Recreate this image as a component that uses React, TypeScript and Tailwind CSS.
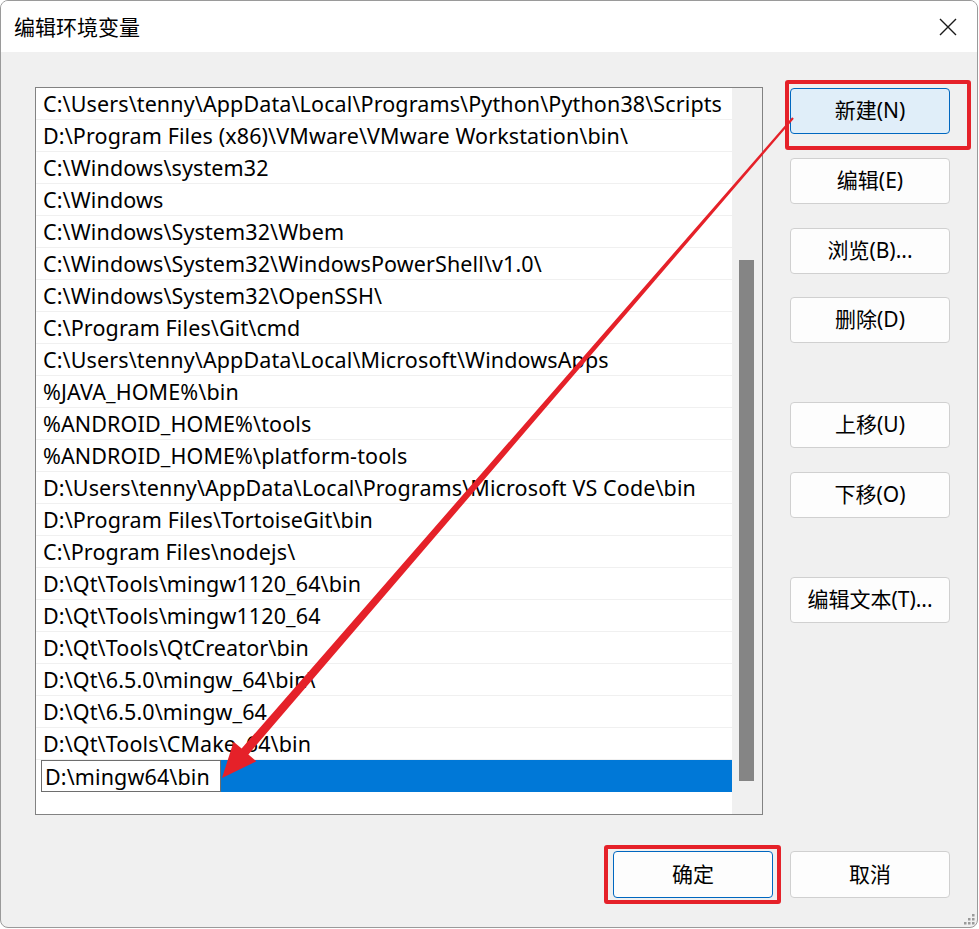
import React from "react";

const rows: string[] = [
  String.raw`C:\Users\tenny\AppData\Local\Programs\Python\Python38\Scripts`,
  String.raw`D:\Program Files (x86)\VMware\VMware Workstation\bin\ `.trim(),
  String.raw`C:\Windows\system32`,
  String.raw`C:\Windows`,
  String.raw`C:\Windows\System32\Wbem`,
  String.raw`C:\Windows\System32\WindowsPowerShell\v1.0\ `.trim(),
  String.raw`C:\Windows\System32\OpenSSH\ `.trim(),
  String.raw`C:\Program Files\Git\cmd`,
  String.raw`C:\Users\tenny\AppData\Local\Microsoft\WindowsApps`,
  String.raw`%JAVA_HOME%\bin`,
  String.raw`%ANDROID_HOME%\tools`,
  String.raw`%ANDROID_HOME%\platform-tools`,
  String.raw`D:\Users\tenny\AppData\Local\Programs\Microsoft VS Code\bin`,
  String.raw`D:\Program Files\TortoiseGit\bin`,
  String.raw`C:\Program Files\nodejs\ `.trim(),
  String.raw`D:\Qt\Tools\mingw1120_64\bin`,
  String.raw`D:\Qt\Tools\mingw1120_64`,
  String.raw`D:\Qt\Tools\QtCreator\bin`,
  String.raw`D:\Qt\6.5.0\mingw_64\bin\ `.trim(),
  String.raw`D:\Qt\6.5.0\mingw_64`,
  String.raw`D:\Qt\Tools\CMake_64\bin`,
];

function Btn({ label, primary, className = "" }: { label: string; primary?: "blue" | "white"; className?: string }) {
  const base =
    primary === "blue"
      ? "bg-[#e0eef9] border-[#0067c0]"
      : primary === "white"
      ? "bg-[#fdfdfd] border-[#0067c0]"
      : "bg-[#fdfdfd] border-[#d0d0d0]";
  return (
    <div
      className={`w-[160px] h-[46px] flex items-center justify-center rounded-[4px] border text-[21px] text-black ${base} ${className}`}
    >
      {label}
    </div>
  );
}

export default function App() {
  return (
    <div
      className="w-[979px] h-[929px] bg-white relative overflow-hidden"
      style={{ fontFamily: "'Segoe UI', 'Noto Sans', 'Noto Sans CJK SC', sans-serif" }}
    >
      <div className="w-[978px] h-[928px] rounded-[8px] border border-[#9a9a9a] bg-[#f0f0f0] flex flex-col overflow-hidden">
        {/* title bar */}
        <div className="h-[51px] bg-white flex items-center justify-between pl-[13px] pr-[20px] shrink-0">
          <span className="text-[21px] text-black leading-none" style={{ fontFamily: "'Noto Sans CJK SC', sans-serif" }}>
            编辑环境变量
          </span>
          <svg width="18" height="18" viewBox="0 0 18 18">
            <path d="M1 1 L17 17 M17 1 L1 17" stroke="#1a1a1a" strokeWidth="1.4" fill="none" />
          </svg>
        </div>

        {/* body */}
        <div className="flex pl-[34px] pt-[35px]">
          {/* list box */}
          <div className="w-[728px] h-[728px] border border-[#828282] bg-white flex">
            <div className="w-[696px] flex flex-col">
              {rows.map((r) => (
                <div
                  key={r}
                  className="h-[32px] shrink-0 border-b border-[#f0f0f0] pl-[7px] pt-[1px] flex items-center text-[21.5px] tracking-[0.12px] text-black whitespace-nowrap leading-none"
                >
                  {r}
                </div>
              ))}
              <div className="h-[32px] shrink-0 flex items-stretch pl-[5px]">
                <div className="w-[180px] border border-[#6e6e6e] bg-white flex items-center pl-[3px] pt-[1px] text-[21.5px] tracking-[0.12px] text-black leading-none">
                  {String.raw`D:\mingw64\bin`}
                </div>
                <div className="flex-1 bg-[#0078d7]" />
              </div>
            </div>
            <div className="flex-1 bg-[#f0f0f0] pl-[7px] pt-[172px]">
              <div className="w-[15px] h-[521px] bg-[#858585]" />
            </div>
          </div>

          {/* right buttons */}
          <div className="ml-[27px] flex flex-col">
            <Btn label="新建(N)" primary="blue" className="mt-[1px]" />
            <Btn label="编辑(E)" className="mt-[24px]" />
            <Btn label="浏览(B)..." className="mt-[24px]" />
            <Btn label="删除(D)" className="mt-[23px]" />
            <Btn label="上移(U)" className="mt-[59px]" />
            <Btn label="下移(O)" className="mt-[24px]" />
            <Btn label="编辑文本(T)..." className="mt-[59px]" />
          </div>
        </div>

        {/* bottom buttons */}
        <div className="flex justify-end gap-[17px] pr-[27px] mt-[36px]">
          <Btn label="确定" primary="white" className="h-[47px]" />
          <Btn label="取消" className="h-[47px]" />
        </div>
      </div>

      {/* annotation boxes */}
      <div className="absolute left-[785px] top-[80px] w-[186px] h-[70px] border-[4px] border-[#e52129] rounded-[3px]" />
      <div className="absolute left-[604px] top-[845px] w-[177px] h-[59px] border-[4px] border-[#e52129] rounded-[3px]" />

      {/* resize grip */}
      <svg className="absolute left-[962px] top-[912px]" width="14" height="14" viewBox="0 0 14 14">
        {[
          [10, 2],
          [6, 6],
          [10, 6],
          [2, 10],
          [6, 10],
          [10, 10],
        ].map(([x, y]) => (
          <rect key={`${x}-${y}`} x={x} y={y} width="2.5" height="2.5" fill="#9a9a9a" />
        ))}
      </svg>

      {/* arrow */}
      <svg className="absolute left-0 top-0 pointer-events-none" width="979" height="929" viewBox="0 0 979 929">
        <polygon
          points="792.2,117.3 793.8,118.7 248.4,754.4 256.4,761.3 222,778 233.6,741.7 241.6,748.6"
          fill="#e52129"
        />
      </svg>
    </div>
  );
}
